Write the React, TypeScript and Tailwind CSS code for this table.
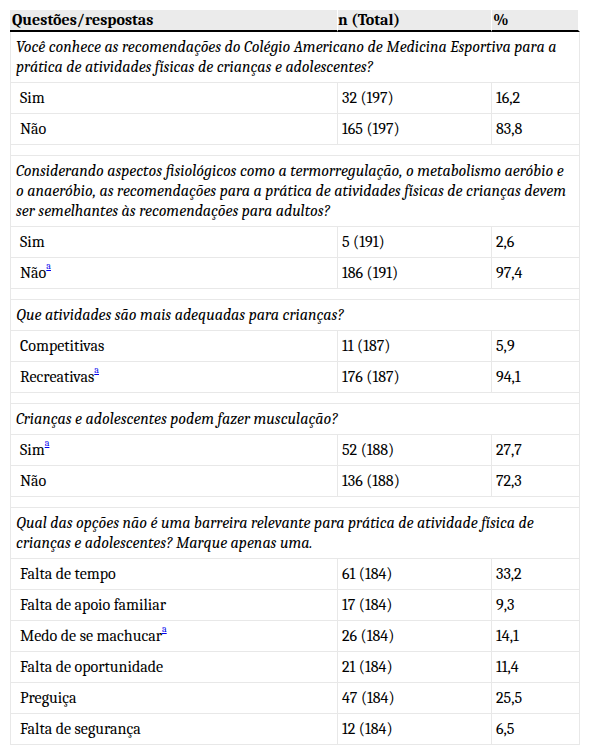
type Answer = { label: string; note?: boolean; n: string; pct: string };
type Question = { text: string; answers: Answer[] };

const questions: Question[] = [
  {
    text: 'Você conhece as recomendações do Colégio Americano de Medicina Esportiva para a prática de atividades físicas de crianças e adolescentes?',
    answers: [
      { label: 'Sim', n: '32 (197)', pct: '16,2' },
      { label: 'Não', n: '165 (197)', pct: '83,8' },
    ],
  },
  {
    text: 'Considerando aspectos fisiológicos como a termorregulação, o metabolismo aeróbio e o anaeróbio, as recomendações para a prática de atividades físicas de crianças devem ser semelhantes às recomendações para adultos?',
    answers: [
      { label: 'Sim', n: '5 (191)', pct: '2,6' },
      { label: 'Não', note: true, n: '186 (191)', pct: '97,4' },
    ],
  },
  {
    text: 'Que atividades são mais adequadas para crianças?',
    answers: [
      { label: 'Competitivas', n: '11 (187)', pct: '5,9' },
      { label: 'Recreativas', note: true, n: '176 (187)', pct: '94,1' },
    ],
  },
  {
    text: 'Crianças e adolescentes podem fazer musculação?',
    answers: [
      { label: 'Sim', note: true, n: '52 (188)', pct: '27,7' },
      { label: 'Não', n: '136 (188)', pct: '72,3' },
    ],
  },
  {
    text: 'Qual das opções não é uma barreira relevante para prática de atividade física de crianças e adolescentes? Marque apenas uma.',
    answers: [
      { label: 'Falta de tempo', n: '61 (184)', pct: '33,2' },
      { label: 'Falta de apoio familiar', n: '17 (184)', pct: '9,3' },
      { label: 'Medo de se machucar', note: true, n: '26 (184)', pct: '14,1' },
      { label: 'Falta de oportunidade', n: '21 (184)', pct: '11,4' },
      { label: 'Preguiça', n: '47 (184)', pct: '25,5' },
      { label: 'Falta de segurança', n: '12 (184)', pct: '6,5' },
    ],
  },
];

const cell = 'border-b border-r border-[#e8e8e8] py-[5px] align-top';
const head = 'text-left font-bold border-b-2 border-b-black';

export default function App() {
  return (
    <div className="bg-white min-h-[750px] pt-[10px] pl-[10px] text-black font-serif text-[16px] leading-[20px]">
      <table className="font-serif text-[16px] leading-[20px] w-[570px] table-fixed border-separate border-spacing-0">
        <colgroup>
          <col className="w-[328px]" />
          <col className="w-[154px]" />
          <col className="w-[88px]" />
        </colgroup>
        <thead>
          <tr className="bg-[#ebebeb]">
            <th className={`${head} pl-[2px] h-[22px] border-r border-r-white`}>Questões/respostas</th>
            <th className={`${head} border-r border-r-white`}>n (Total)</th>
            <th className={`${head} pl-[1px] border-r-2 border-r-white`}>%</th>
          </tr>
        </thead>
        <tbody>
          {questions.map((q, qi) => (
            <>
              {qi > 0 && (
                <tr key={`sp${qi}`}>
                  <td colSpan={3} className={`${cell} border-l h-[11px]`} />
                </tr>
              )}
              <tr key={`q${qi}`}>
                <td colSpan={3} className={`${cell} border-l italic px-[5px]`}>
                  {q.text}
                </td>
              </tr>
              {q.answers.map((a, ai) => (
                <tr key={`a${qi}-${ai}`}>
                  <td className={`${cell} border-l pl-[9px]`}>
                    {a.label}
                    {a.note && (
                      <sup className="text-[10px] text-[#0000ee] underline align-top relative -top-[2px] leading-none">a</sup>
                    )}
                  </td>
                  <td className={`${cell} pl-[4px]`}>{a.n}</td>
                  <td className={`${cell} pl-[4px]`}>{a.pct}</td>
                </tr>
              ))}
            </>
          ))}
        </tbody>
      </table>
    </div>
  );
}
